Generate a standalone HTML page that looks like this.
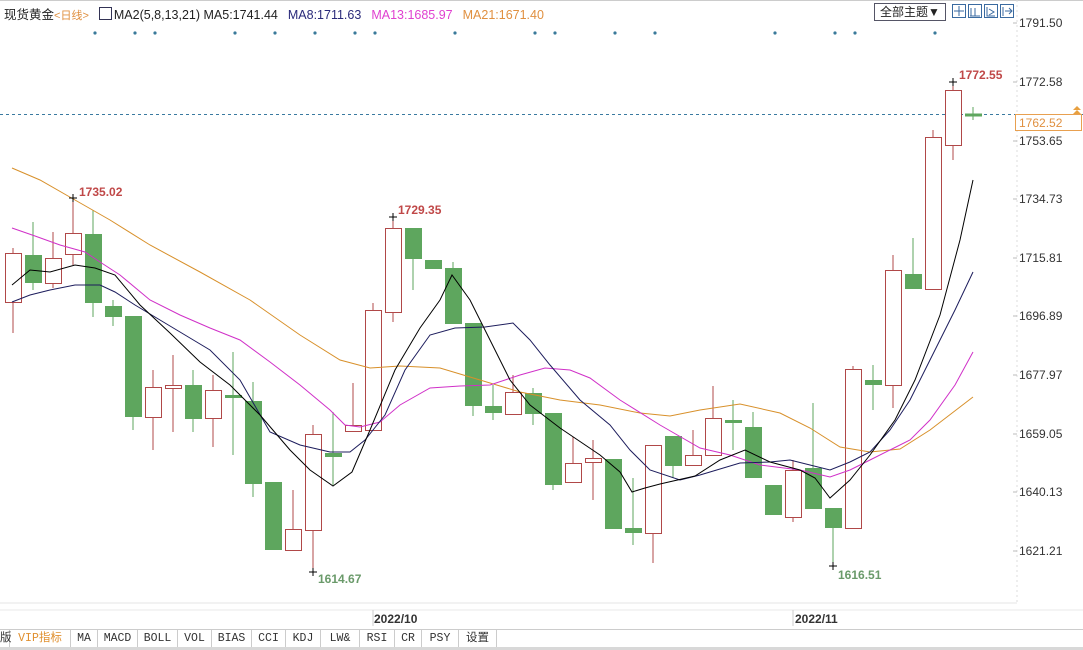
<!DOCTYPE html>
<html><head><meta charset="utf-8"><style>
body{margin:0;width:1083px;height:650px;background:#fff;overflow:hidden;position:relative;font-family:"Liberation Sans","Noto Sans CJK SC",sans-serif}
.hd{position:absolute;top:4px;left:4px;font-size:12.5px;white-space:nowrap;color:#222}
.hd span{margin-right:10px}
.ax{position:absolute;left:1019px;font-size:12px;color:#333}
.tabs{position:absolute;top:629px;left:0;width:1083px;height:18px;border-top:1px solid #ccc;background:#fff;font-family:"Liberation Mono","Noto Sans CJK SC",monospace;font-size:11.5px}
.tabs div{position:absolute;top:0;height:17px;line-height:17px;text-align:center;border-right:1px solid #ccc;color:#333}
.u rect{fill:#fff;stroke:#b04848;stroke-width:1}
.u line{stroke:#b04848}
.d rect{fill:#5ea65e;stroke:#5ea65e}
.d line{stroke:#5ea65e}
</style></head><body>
<div class="hd">现货黄金<span style="color:#e09040;font-size:11px">&lt;日线&gt;</span><span style="display:inline-block;width:11px;height:11px;border:1px solid #335;margin-right:2px;vertical-align:-1px"></span><span>MA2(5,8,13,21) MA5:1741.44</span><span style="color:#2a2a7a">MA8:1711.63</span><span style="color:#e040d0">MA13:1685.97</span><span style="color:#e09040">MA21:1671.40</span></div>
<div style="position:absolute;left:874px;top:3px;width:70px;height:16px;border:1px solid #556;font-size:12px;line-height:16px;text-align:center;color:#222">全部主题▼</div>
<svg style="position:absolute;left:0;top:0" width="1083" height="650">
<rect x="0" y="0" width="1083" height="1" fill="#ccc"/>
<g fill="none" stroke="#3a6aa0">
<rect x="952.5" y="4.5" width="13" height="13"/><rect x="968.5" y="4.5" width="13" height="13"/><rect x="984.5" y="4.5" width="13" height="13"/><rect x="1000.5" y="4.5" width="13" height="13"/>
<path d="M959 6v10M954 11h10M971 8v8M975 8v8M970 16h10M987 7v9h8M989 9l5 3l-5 3M1003 7v9M1005 11h7M1009 8l3 3l-3 3"/>
</g>
<g fill="#3a7a9a">
<circle cx="95" cy="33" r="1.6"/><circle cx="135" cy="33" r="1.6"/><circle cx="155" cy="33" r="1.6"/><circle cx="235" cy="33" r="1.6"/><circle cx="275" cy="33" r="1.6"/><circle cx="315" cy="33" r="1.6"/><circle cx="355" cy="33" r="1.6"/><circle cx="375" cy="33" r="1.6"/><circle cx="455" cy="33" r="1.6"/><circle cx="535" cy="33" r="1.6"/><circle cx="555" cy="33" r="1.6"/><circle cx="615" cy="33" r="1.6"/><circle cx="655" cy="33" r="1.6"/><circle cx="775" cy="33" r="1.6"/><circle cx="835" cy="33" r="1.6"/><circle cx="855" cy="33" r="1.6"/><circle cx="935" cy="33" r="1.6"/>
</g>
<line x1="1017" y1="0" x2="1017" y2="603" stroke="#ddd" stroke-dasharray="2,3"/>
<g stroke="#bbb"><line x1="1013" y1="23" x2="1017" y2="23"/><line x1="1013" y1="82" x2="1017" y2="82"/><line x1="1013" y1="141" x2="1017" y2="141"/><line x1="1013" y1="199" x2="1017" y2="199"/><line x1="1013" y1="258" x2="1017" y2="258"/><line x1="1013" y1="316" x2="1017" y2="316"/><line x1="1013" y1="375" x2="1017" y2="375"/><line x1="1013" y1="434" x2="1017" y2="434"/><line x1="1013" y1="492" x2="1017" y2="492"/><line x1="1013" y1="551" x2="1017" y2="551"/></g>
<line x1="0" y1="603" x2="1017" y2="603" stroke="#e4e4e4"/>
<line x1="0" y1="610" x2="1083" y2="610" stroke="#e8e8e8"/>
<line x1="0" y1="114.5" x2="1083" y2="114.5" stroke="#3a7aa0" stroke-dasharray="3,3"/>
<g class="u"><line x1="13" y1="248" x2="13" y2="333"/><rect x="5.5" y="253.5" width="16" height="49"/></g>
<g class="d"><line x1="33" y1="222" x2="33" y2="290"/><rect x="25.5" y="255.5" width="16" height="27"/></g>
<g class="u"><line x1="53" y1="232" x2="53" y2="288"/><rect x="45.5" y="258.5" width="16" height="25"/></g>
<g class="u"><line x1="73" y1="198" x2="73" y2="265"/><rect x="65.5" y="233.5" width="16" height="21"/></g>
<g class="d"><line x1="93" y1="210" x2="93" y2="317"/><rect x="85.5" y="234.5" width="16" height="68"/></g>
<g class="d"><line x1="113" y1="300" x2="113" y2="326"/><rect x="105.5" y="306.5" width="16" height="10"/></g>
<g class="d"><line x1="133" y1="316" x2="133" y2="430"/><rect x="125.5" y="316.5" width="16" height="100"/></g>
<g class="u"><line x1="153" y1="370" x2="153" y2="450"/><rect x="145.5" y="387.5" width="16" height="30"/></g>
<g class="u"><line x1="173" y1="355" x2="173" y2="432"/><rect x="165.5" y="385.5" width="16" height="3"/></g>
<g class="d"><line x1="193" y1="370" x2="193" y2="432"/><rect x="185.5" y="385.5" width="16" height="33"/></g>
<g class="u"><line x1="213" y1="375" x2="213" y2="447"/><rect x="205.5" y="390.5" width="16" height="28"/></g>
<g class="d"><line x1="233" y1="352" x2="233" y2="455"/><rect x="225.5" y="395.5" width="16" height="2"/></g>
<g class="d"><line x1="253" y1="382" x2="253" y2="497"/><rect x="245.5" y="401.5" width="16" height="82"/></g>
<g class="d"><line x1="273" y1="482" x2="273" y2="550"/><rect x="265.5" y="482.5" width="16" height="67"/></g>
<g class="u"><line x1="293" y1="490" x2="293" y2="550"/><rect x="285.5" y="529.5" width="16" height="21"/></g>
<g class="u"><line x1="313" y1="425" x2="313" y2="572"/><rect x="305.5" y="434.5" width="16" height="96"/></g>
<g class="d"><line x1="333" y1="412" x2="333" y2="485"/><rect x="325.5" y="453.5" width="16" height="3"/></g>
<g class="u"><line x1="353" y1="383" x2="353" y2="432"/><rect x="345.5" y="425.5" width="16" height="6"/></g>
<g class="u"><line x1="373" y1="303" x2="373" y2="430"/><rect x="365.5" y="310.5" width="16" height="120"/></g>
<g class="u"><line x1="393" y1="217" x2="393" y2="322"/><rect x="385.5" y="228.5" width="16" height="84"/></g>
<g class="d"><line x1="413" y1="228" x2="413" y2="290"/><rect x="405.5" y="228.5" width="16" height="30"/></g>
<g class="d"><line x1="433" y1="260" x2="433" y2="268"/><rect x="425.5" y="260.5" width="16" height="8"/></g>
<g class="d"><line x1="453" y1="262" x2="453" y2="323"/><rect x="445.5" y="268.5" width="16" height="55"/></g>
<g class="d"><line x1="473" y1="323" x2="473" y2="416"/><rect x="465.5" y="323.5" width="16" height="82"/></g>
<g class="d"><line x1="493" y1="385" x2="493" y2="420"/><rect x="485.5" y="406.5" width="16" height="6"/></g>
<g class="u"><line x1="513" y1="375" x2="513" y2="414"/><rect x="505.5" y="392.5" width="16" height="22"/></g>
<g class="d"><line x1="533" y1="388" x2="533" y2="425"/><rect x="525.5" y="393.5" width="16" height="20"/></g>
<g class="d"><line x1="553" y1="413" x2="553" y2="490"/><rect x="545.5" y="413.5" width="16" height="71"/></g>
<g class="u"><line x1="573" y1="437" x2="573" y2="482"/><rect x="565.5" y="463.5" width="16" height="19"/></g>
<g class="u"><line x1="593" y1="440" x2="593" y2="500"/><rect x="585.5" y="458.5" width="16" height="4"/></g>
<g class="d"><line x1="613" y1="459" x2="613" y2="528"/><rect x="605.5" y="459.5" width="16" height="69"/></g>
<g class="d"><line x1="633" y1="478" x2="633" y2="545"/><rect x="625.5" y="528.5" width="16" height="4"/></g>
<g class="u"><line x1="653" y1="445" x2="653" y2="563"/><rect x="645.5" y="445.5" width="16" height="88"/></g>
<g class="d"><line x1="673" y1="436" x2="673" y2="478"/><rect x="665.5" y="436.5" width="16" height="29"/></g>
<g class="u"><line x1="693" y1="430" x2="693" y2="465"/><rect x="685.5" y="455.5" width="16" height="10"/></g>
<g class="u"><line x1="713" y1="386" x2="713" y2="455"/><rect x="705.5" y="418.5" width="16" height="37"/></g>
<g class="d"><line x1="733" y1="400" x2="733" y2="450"/><rect x="725.5" y="420.5" width="16" height="2"/></g>
<g class="d"><line x1="753" y1="412" x2="753" y2="477"/><rect x="745.5" y="427.5" width="16" height="50"/></g>
<g class="d"><line x1="773" y1="485" x2="773" y2="514"/><rect x="765.5" y="485.5" width="16" height="29"/></g>
<g class="u"><line x1="793" y1="460" x2="793" y2="522"/><rect x="785.5" y="470.5" width="16" height="47"/></g>
<g class="d"><line x1="813" y1="403" x2="813" y2="508"/><rect x="805.5" y="468.5" width="16" height="40"/></g>
<g class="d"><line x1="833" y1="508" x2="833" y2="566"/><rect x="825.5" y="508.5" width="16" height="19"/></g>
<g class="u"><line x1="853" y1="366" x2="853" y2="528"/><rect x="845.5" y="369.5" width="16" height="159"/></g>
<g class="d"><line x1="873" y1="365" x2="873" y2="410"/><rect x="865.5" y="380.5" width="16" height="4"/></g>
<g class="u"><line x1="893" y1="255" x2="893" y2="408"/><rect x="885.5" y="270.5" width="16" height="115"/></g>
<g class="d"><line x1="913" y1="238" x2="913" y2="288"/><rect x="905.5" y="274.5" width="16" height="14"/></g>
<g class="u"><line x1="933" y1="130" x2="933" y2="289"/><rect x="925.5" y="137.5" width="16" height="152"/></g>
<g class="u"><line x1="953" y1="82" x2="953" y2="160"/><rect x="945.5" y="90.5" width="16" height="55"/></g>
<g class="d"><line x1="973" y1="107" x2="973" y2="120"/><rect x="965.5" y="114" width="16" height="2"/></g>
<g fill="none" stroke-width="1">
<polyline stroke="#d8902a" points="12,168 40,180 75,200 110,220 150,245 200,272 250,300 300,335 340,360 370,368 400,366 440,368 480,380 520,392 560,400 600,405 640,413 670,416 700,410 740,404 780,413 810,428 840,447 870,452 900,449 930,430 973,397"/>
<polyline stroke="#d030c8" points="12,228 35,236 60,245 85,252 100,262 120,275 150,300 180,315 210,328 240,340 270,362 300,385 330,410 345,425 360,427 380,422 400,405 430,388 460,386 490,385 520,375 545,368 570,370 590,378 620,400 660,425 700,448 730,455 760,465 800,470 830,477 850,470 870,460 890,450 910,440 930,420 955,385 973,352"/>
<polyline stroke="#1c1c5c" points="12,302 30,295 50,290 75,285 100,285 115,292 135,305 160,320 190,338 210,350 240,380 270,432 300,445 330,452 350,452 365,440 385,415 405,370 430,335 455,328 485,327 513,323 530,340 550,365 580,400 610,425 630,450 650,470 680,480 700,475 740,463 770,462 790,460 810,465 830,470 850,462 870,452 890,430 910,400 935,350 955,310 973,272"/>
<polyline stroke="#000" points="12,285 30,270 50,272 75,265 95,268 115,275 140,305 170,333 200,362 230,385 260,415 290,450 310,470 333,486 352,472 370,430 395,370 420,328 440,300 452,275 470,300 490,340 510,380 530,405 560,428 600,455 620,472 632,492 645,488 660,484 695,476 720,460 745,450 770,462 800,470 815,478 830,498 850,480 870,455 895,420 915,380 940,315 960,240 973,180"/>
</g>
<g stroke="#000"><path d="M69 198h8M73 194v8M389 217h8M393 213v8M949 82h8M953 78v8M309 572h8M313 568v8M829 566h8M833 562v8"/></g>
<g font-family="Liberation Sans,sans-serif" font-size="12" font-weight="bold">
<text x="79" y="196" fill="#c04848">1735.02</text>
<text x="398" y="214" fill="#c04848">1729.35</text>
<text x="959" y="79" fill="#c04848">1772.55</text>
<text x="318" y="583" fill="#6a9a6a">1614.67</text>
<text x="838" y="579" fill="#6a9a6a">1616.51</text>
<text x="374" y="623" fill="#333">2022/10</text>
<text x="795" y="623" fill="#333">2022/11</text>
</g>
<line x1="373" y1="610" x2="373" y2="626" stroke="#ccc"/>
<line x1="793" y1="610" x2="793" y2="626" stroke="#ccc"/>
<rect x="1015.5" y="114.5" width="66" height="16" fill="#fff" stroke="#e8a050"/>
<text x="1019" y="127" font-size="12" fill="#e09040" font-family="Liberation Sans,sans-serif">1762.52</text>
<path d="M1073 110l4-4l4 4zM1073 114l4-4l4 4z" fill="#e8a040"/>
</svg>
<div class="ax" style="top:16px">1791.50</div>
<div class="ax" style="top:75px">1772.58</div>
<div class="ax" style="top:134px">1753.65</div>
<div class="ax" style="top:192px">1734.73</div>
<div class="ax" style="top:251px">1715.81</div>
<div class="ax" style="top:309px">1696.89</div>
<div class="ax" style="top:368px">1677.97</div>
<div class="ax" style="top:427px">1659.05</div>
<div class="ax" style="top:485px">1640.13</div>
<div class="ax" style="top:544px">1621.21</div>
<div class="tabs">
<div style="left:0;width:9px;text-align:left">版</div>
<div style="left:10px;width:60px;color:#e09030">VIP指标</div>
<div style="left:71px;width:26px">MA</div>
<div style="left:98px;width:39px">MACD</div>
<div style="left:138px;width:39px">BOLL</div>
<div style="left:178px;width:33px">VOL</div>
<div style="left:212px;width:39px">BIAS</div>
<div style="left:252px;width:33px">CCI</div>
<div style="left:286px;width:34px">KDJ</div>
<div style="left:321px;width:38px">LW&amp;</div>
<div style="left:360px;width:34px">RSI</div>
<div style="left:395px;width:26px">CR</div>
<div style="left:422px;width:36px">PSY</div>
<div style="left:459px;width:37px">设置</div>
</div>
<div style="position:absolute;left:0;top:647px;width:1083px;height:3px;background:#d8d8d8"></div>
</body></html>
